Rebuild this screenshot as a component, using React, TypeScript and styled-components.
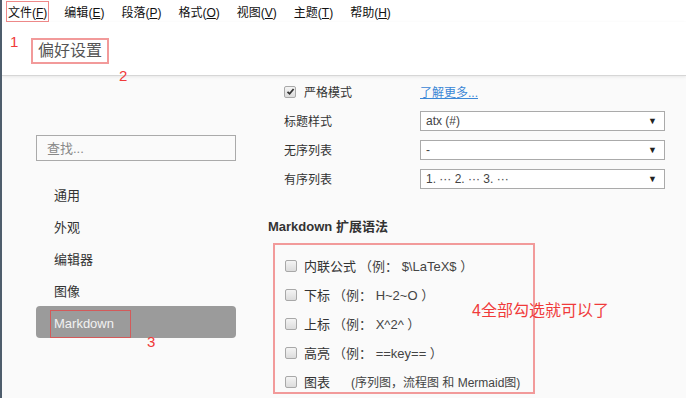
import styled, {createGlobalStyle} from 'styled-components'

const GlobalStyle = createGlobalStyle`
    html, body {
        margin: 0;
        padding: 0;
        background: #fafafa;
    }
    body {
        font-family: 'Liberation Sans', 'Noto Sans CJK SC', sans-serif;
        color: #333;
    }
`

const menus = [
    {label: '文件', key: 'F'},
    {label: '编辑', key: 'E'},
    {label: '段落', key: 'P'},
    {label: '格式', key: 'O'},
    {label: '视图', key: 'V'},
    {label: '主题', key: 'T'},
    {label: '帮助', key: 'H'},
]

const navItems = ['通用', '外观', '编辑器', '图像', 'Markdown']

const selects = [
    {label: '标题样式', value: 'atx (#)'},
    {label: '无序列表', value: '-'},
    {label: '有序列表', value: '1. ··· 2. ··· 3. ···'},
]

const extensions = [
    {label: '内联公式', hint: '（例： $\\LaTeX$ ）'},
    {label: '下标', hint: '（例： H~2~O ）'},
    {label: '上标', hint: '（例： X^2^ ）'},
    {label: '高亮', hint: '（例： ==key== ）'},
    {label: '图表', hint: '(序列图，流程图 和 Mermaid图)', wide: true},
]

// checkbox drawn by css
const Check = ({checked}: {checked?: boolean}) => (
    <CheckBox>
        {checked && (
            <svg width="9" height="9" viewBox="0 0 9 9">
                <path d="M1.5 4.8 L3.6 6.8 L7.6 2" stroke="#333" strokeWidth="1.8" fill="none" />
            </svg>
        )}
    </CheckBox>
)

export default function App() {
    return (
        <Page>
            <GlobalStyle />
            <MenuBar>
                {menus.map((m, i) => (
                    <MenuItem key={m.key} $boxed={i === 0}>
                        {m.label}(<u>{m.key}</u>)
                    </MenuItem>
                ))}
            </MenuBar>
            <Header>
                <Note $left={8} $top={11}>1</Note>
                <Title>偏好设置</Title>
                <Note $left={117} $top={45}>2</Note>
            </Header>
            <Body>
                <Sidebar>
                    <Search placeholder="查找..." />
                    <Nav>
                        {navItems.map((item) => (
                            <NavItem key={item} $active={item === 'Markdown'}>
                                {item === 'Markdown' ? (
                                    <>
                                        <ActiveLabel>{item}</ActiveLabel>
                                        <Note $left={111} $top={27}>3</Note>
                                    </>
                                ) : (
                                    item
                                )}
                            </NavItem>
                        ))}
                    </Nav>
                </Sidebar>
                <Main>
                    <Row>
                        <CheckLabel>
                            <Check checked />
                            严格模式
                        </CheckLabel>
                        <Link>了解更多...</Link>
                    </Row>
                    {selects.map((s) => (
                        <Row key={s.label}>
                            <Label>{s.label}</Label>
                            <Select>
                                <span>{s.value}</span>
                                <Arrow>▼</Arrow>
                            </Select>
                        </Row>
                    ))}
                    <Heading>Markdown 扩展语法</Heading>
                    <ExtBox>
                        {extensions.map((e) => (
                            <ExtRow key={e.label}>
                                <Check />
                                <span>{e.label}</span>
                                <Hint $wide={e.wide}>{e.hint}</Hint>
                            </ExtRow>
                        ))}
                        <BigNote>4全部勾选就可以了</BigNote>
                    </ExtBox>
                </Main>
            </Body>
        </Page>
    )
}

const Page = styled.div`
    width: 686px;
    height: 398px;
    overflow: hidden;
    position: relative;
    border-left: 2px solid #4e5d6c;
    box-sizing: border-box;
`

const MenuBar = styled.div`
    height: 22px;
    display: flex;
    align-items: center;
    gap: 13px;
    padding-left: 4px;
    background: #fff;
    font-size: 12px;
    color: #111;
`

const MenuItem = styled.span<{$boxed?: boolean}>`
    padding: 1px 1px;
    border: 1px solid ${({$boxed}) => ($boxed ? '#f08a8a' : 'transparent')};
    u {
        text-decoration: underline;
    }
`

const Header = styled.div`
    position: relative;
    z-index: 1;
    height: 54px;
    background: #fff;
    border-bottom: 1px solid #d6d6d6;
    box-shadow: 0 1px 3px rgba(0, 0, 0, 0.08);
    padding: 16px 0 0 29px;
    box-sizing: border-box;
`

const Title = styled.div`
    display: inline-block;
    border: 2px solid #f29a9a;
    padding: 1px 5px;
    font-size: 16px;
    line-height: 20px;
    color: #555;
`

const Note = styled.span<{$left: number; $top: number}>`
    position: absolute;
    left: ${({$left}) => $left}px;
    top: ${({$top}) => $top}px;
    color: #f03a3a;
    font-size: 15px;
    line-height: 18px;
`

const Body = styled.div`
    display: flex;
`

const Sidebar = styled.div`
    width: 266px;
    padding: 59px 0 0 34px;
    box-sizing: border-box;
`

const Search = styled.input`
    display: block;
    width: 200px;
    height: 26px;
    box-sizing: border-box;
    border: 1px solid #aaa;
    background: #fafafa;
    padding: 0 10px;
    font-size: 13px;
    font-family: inherit;
    &::placeholder {
        color: #888;
    }
`

const Nav = styled.div`
    display: flex;
    flex-direction: column;
    margin-top: 17px;
    width: 200px;
`

const NavItem = styled.div<{$active?: boolean}>`
    position: relative;
    height: 32px;
    display: flex;
    align-items: center;
    padding-left: 18px;
    font-size: 13px;
    border-radius: 4px;
    color: ${({$active}) => ($active ? '#f2f2f2' : '#333')};
    background: ${({$active}) => ($active ? '#9b9b9b' : 'transparent')};
`

const ActiveLabel = styled.span`
    border: 1px solid #d35a5a;
    padding: 5px 16px 6px 3px;
    margin-left: -4px;
    margin-top: 3px;
`

const Main = styled.div`
    flex: 1;
    padding-top: 1px;
`

const Row = styled.div`
    height: 29px;
    display: flex;
    align-items: center;
    padding-left: 16px;
    font-size: 12px;
`

const CheckLabel = styled.label`
    width: 136px;
    display: flex;
    align-items: center;
    gap: 8px;
`

const Label = styled.span`
    width: 136px;
`

const Link = styled.span`
    color: #3b87d6;
    text-decoration: underline;
`

const Select = styled.div`
    width: 245px;
    height: 20px;
    box-sizing: border-box;
    border: 1px solid #aaa;
    background: #fff;
    display: flex;
    align-items: center;
    justify-content: space-between;
    padding: 0 7px 0 5px;
    font-size: 12px;
    color: #444;
`

const Arrow = styled.span`
    font-size: 9px;
    color: #222;
`

const CheckBox = styled.span`
    width: 12px;
    height: 12px;
    box-sizing: border-box;
    border: 1px solid #a8a8a8;
    border-radius: 2px;
    background: linear-gradient(#f4f4f4, #dcdcdc);
    display: inline-flex;
    align-items: center;
    justify-content: center;
    flex-shrink: 0;
`

const Heading = styled.div`
    margin-top: 24px;
    font-size: 13px;
    font-weight: bold;
    line-height: 20px;
    color: #333;
`

const ExtBox = styled.div`
    position: relative;
    margin: 6px 0 0 5px;
    width: 262px;
    height: 151px;
    box-sizing: border-box;
    border: 2px solid #f29a9a;
    padding: 6px 0 0 10px;
`

const ExtRow = styled.div`
    height: 29px;
    display: flex;
    align-items: center;
    gap: 7px;
    font-size: 13px;
    color: #333;
`

const Hint = styled.span<{$wide?: boolean}>`
    margin-left: ${({$wide}) => ($wide ? '14px' : '-4px')};
    font-size: ${({$wide}) => ($wide ? '12px' : '13px')};
    color: #444;
`

const BigNote = styled.span`
    position: absolute;
    left: 197px;
    top: 52px;
    color: #f03a3a;
    font-size: 16px;
    white-space: nowrap;
`
